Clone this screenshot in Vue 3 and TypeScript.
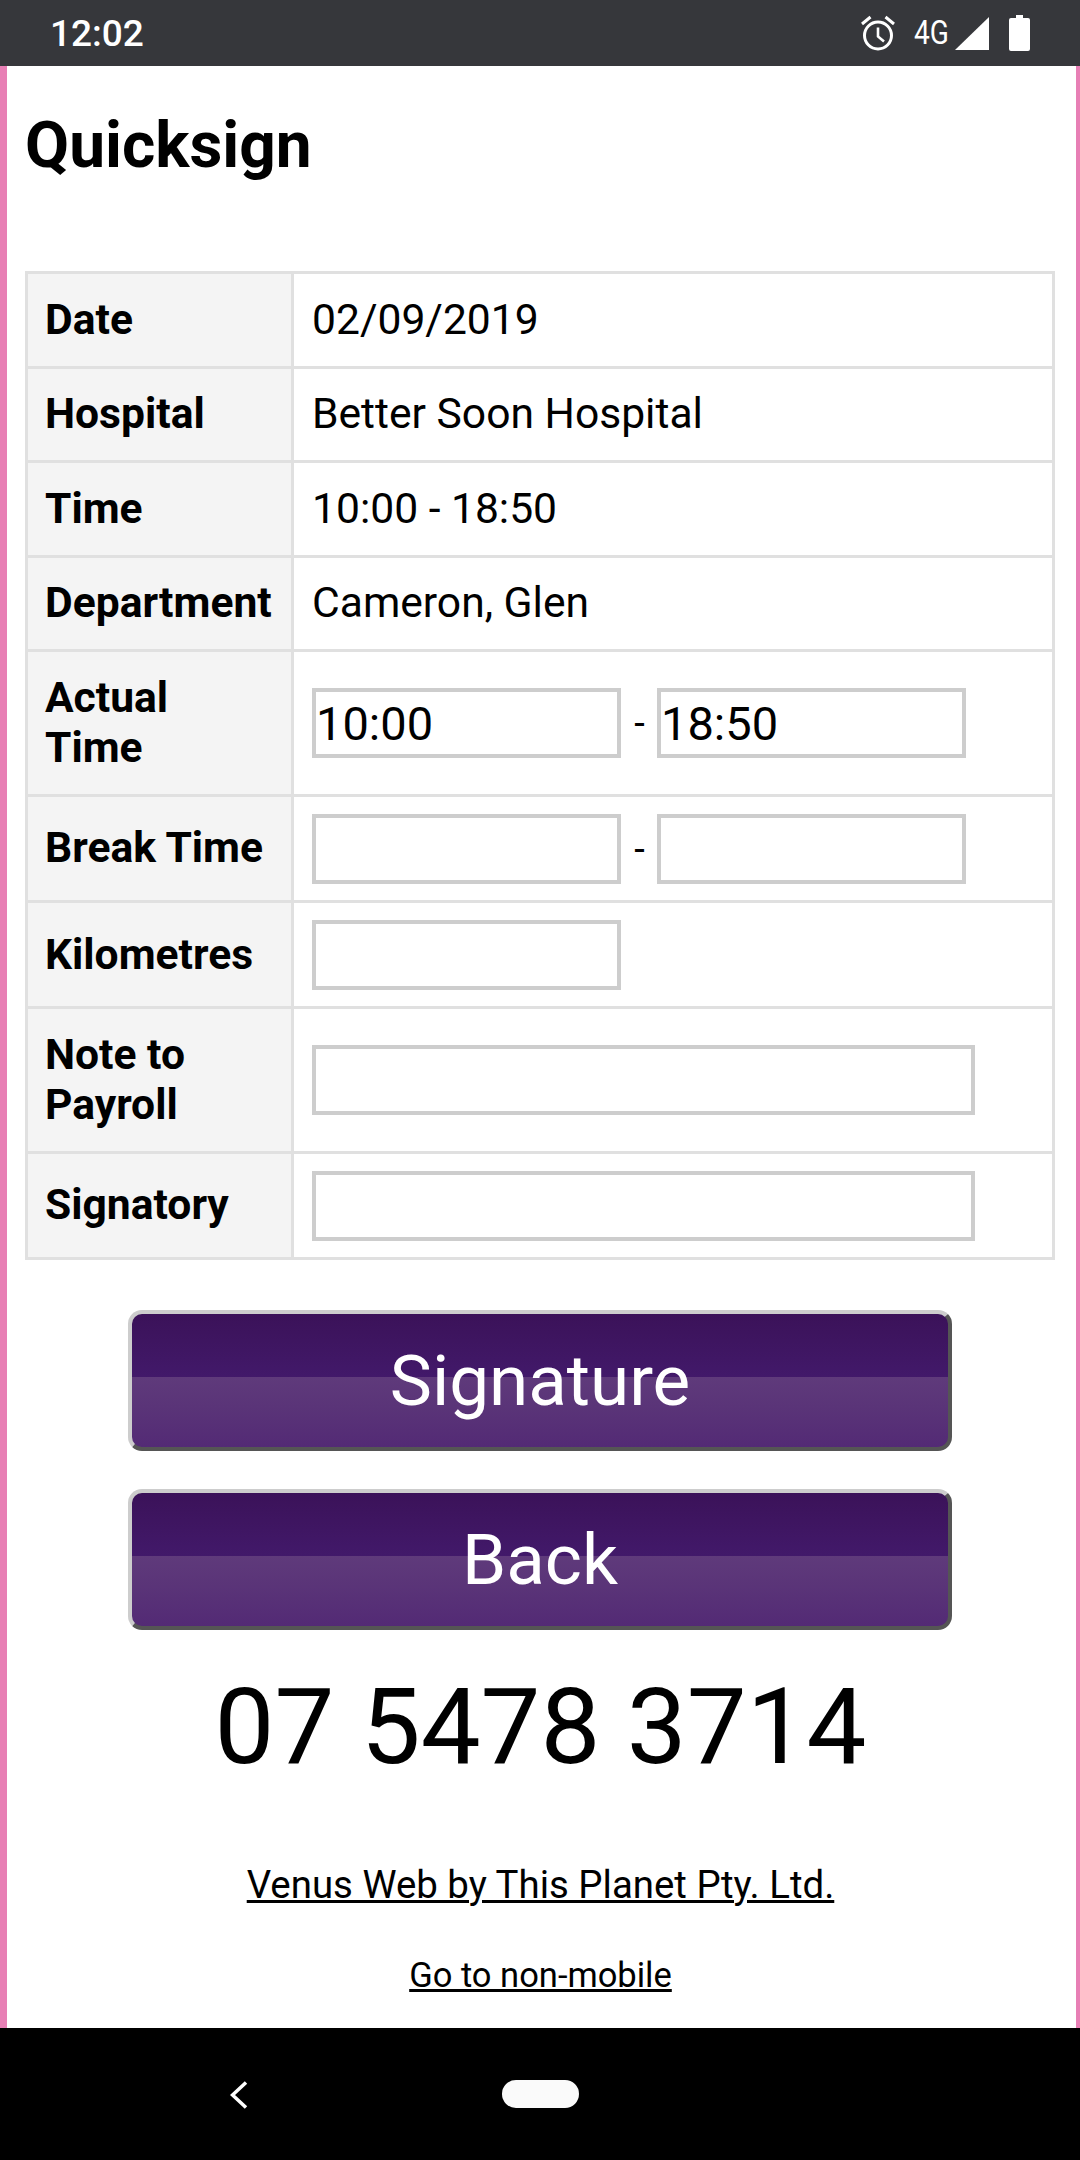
<script setup lang="ts">
const infoRows = [
  { label: 'Date', value: '02/09/2019' },
  { label: 'Hospital', value: 'Better Soon Hospital' },
  { label: 'Time', value: '10:00 - 18:50' },
  { label: 'Department', value: 'Cameron, Glen' },
];
</script>

<template>
  <div class="screen">
    <header class="status-bar">
      <span class="clock">12:02</span>
      <div class="status-icons">
        <svg class="alarm" width="36" height="36" viewBox="0 0 36 36">
          <circle cx="18" cy="20.5" r="13.5" fill="none" stroke="#fff" stroke-width="3" />
          <path d="M18 12.5v9l6 5" fill="none" stroke="#fff" stroke-width="2.6" />
          <path d="M2 9 10.500 2M34 9 25.500 2" fill="none" stroke="#fff" stroke-width="3" />
        </svg>
        <span class="network">4G</span>
        <svg class="signal" width="34" height="33" viewBox="0 0 34 33">
          <path d="M0 33 34 0v33z" fill="#fff" />
        </svg>
        <svg class="battery" width="21" height="36" viewBox="0 0 21 36">
          <path d="M7 0h7v3h5a2 2 0 0 1 2 2v29a2 2 0 0 1-2 2H2a2 2 0 0 1-2-2V5a2 2 0 0 1 2-2h5z" fill="#fff" />
        </svg>
      </div>
    </header>

    <main class="page">
      <h1>Quicksign</h1>
      <table class="sign-table">
        <colgroup>
          <col class="label-col" />
          <col />
        </colgroup>
        <tbody>
          <tr v-for="row in infoRows" :key="row.label">
            <th>{{ row.label }}</th>
            <td>{{ row.value }}</td>
          </tr>
          <tr>
            <th>Actual<br />Time</th>
            <td class="field">
              <div class="time-range">
                <input class="short" type="text" value="10:00" />
                <span class="dash">-</span>
                <input class="short" type="text" value="18:50" />
              </div>
            </td>
          </tr>
          <tr>
            <th>Break Time</th>
            <td class="field">
              <div class="time-range">
                <input class="short" type="text" />
                <span class="dash">-</span>
                <input class="short" type="text" />
              </div>
            </td>
          </tr>
          <tr>
            <th>Kilometres</th>
            <td class="field"><input class="short" type="text" /></td>
          </tr>
          <tr>
            <th>Note to<br />Payroll</th>
            <td class="field"><input class="long" type="text" /></td>
          </tr>
          <tr>
            <th>Signatory</th>
            <td class="field"><input class="long" type="text" /></td>
          </tr>
        </tbody>
      </table>

      <div class="actions">
        <button type="button" class="gel-btn">Signature</button>
        <button type="button" class="gel-btn">Back</button>
      </div>

      <div class="phone">07 5478 3714</div>
      <a class="credit" href="#">Venus Web by This Planet Pty. Ltd.</a>
      <a class="non-mobile" href="#">Go to non-mobile</a>
    </main>

    <footer class="nav-bar">
      <svg class="nav-back" width="18" height="28" viewBox="0 0 18 28">
        <path d="M16 1.500 2.500 14 16 26.500" fill="none" stroke="#fff" stroke-width="3.5" />
      </svg>
      <span class="nav-home"></span>
    </footer>
  </div>
</template>

<style>
html,
body {
  margin: 0;
  background: #000;
}
</style>

<style scoped>
.screen {
  width: 1080px;
  height: 2160px;
  display: flex;
  flex-direction: column;
  overflow: hidden;
  font-family: Roboto, "Liberation Sans", sans-serif;
  color: #000;
  background: #fff;
}

.status-bar {
  flex: 0 0 66px;
  box-sizing: border-box;
  padding: 0 50px 0 50px;
  display: flex;
  align-items: center;
  justify-content: space-between;
  background: #36373b;
  color: #fff;
}
.clock {
  font-size: 37px;
  font-weight: 500;
}
.status-icons {
  display: flex;
  align-items: center;
}
.alarm {
  margin-right: 18px;
}
.network {
  width: 36px;
  font-size: 33px;
  line-height: 36px;
  transform: scaleX(0.85);
  transform-origin: left center;
  margin-right: 5px;
}
.signal {
  margin-right: 20px;
}

.page {
  flex: 1;
  min-height: 0;
  box-sizing: border-box;
  padding: 0 4px 0 7px;
  background: linear-gradient(#fff, #fff) content-box, #e87fb5;
  display: flex;
  flex-direction: column;
  align-items: center;
}
h1 {
  align-self: flex-start;
  margin: 44px 0 89px 18px;
  font-size: 64px;
  line-height: 72px;
  font-weight: 700;
}

.sign-table {
  align-self: flex-start;
  margin-left: 18px;
  width: 1030px;
  table-layout: fixed;
  border-collapse: collapse;
  font-size: 42.6px;
  line-height: 50px;
}
.label-col {
  width: 266px;
}
th,
td {
  border: 3px solid #e0e0e0;
  padding: 19.6px 18px 22px;
  text-align: left;
}
th {
  padding-left: 17px;
  background: #f4f4f4;
  font-weight: 700;
}
td.field {
  padding-top: 16.6px;
  padding-bottom: 16.6px;
}
.time-range {
  display: flex;
  align-items: center;
}
.dash {
  width: 36px;
  padding-left: 1px;
  box-sizing: border-box;
  text-align: center;
  font-size: 38px;
}
input {
  display: block;
  box-sizing: border-box;
  height: 70px;
  margin: 0;
  padding: 0;
  border: 4px solid #cdcdcd;
  border-radius: 0;
  outline: none;
  background: #fff;
  font-family: inherit;
  font-size: 47px;
  color: #000;
}
.short {
  width: 309px;
}
.long {
  width: 663px;
}

.actions {
  margin-top: 50px;
  margin-right: 3px;
  display: flex;
  flex-direction: column;
  gap: 37.5px;
}
.gel-btn {
  box-sizing: border-box;
  width: 824px;
  height: 141px;
  padding: 0;
  border: 4px solid;
  border-color: #cdcdcd #555 #555 #cdcdcd;
  border-radius: 14px;
  background: linear-gradient(#3b1259 0%, #42196a 47.5%, #5f3a7b 47.5%, #5a3478 70%, #532a75 100%);
  color: #fff;
  font-family: inherit;
  font-size: 71px;
}

.phone {
  margin-top: 35px;
  margin-right: 2px;
  font-size: 106.6px;
  line-height: 124px;
}
.credit {
  margin-top: 73px;
  margin-right: 2px;
  font-size: 38.4px;
  line-height: 45px;
  color: #000;
}
.non-mobile {
  margin-top: 48px;
  margin-right: 2px;
  font-size: 34.5px;
  line-height: 41px;
  color: #000;
}

.nav-bar {
  flex: 0 0 132px;
  position: relative;
  background: #000;
}
.nav-back {
  position: absolute;
  left: 230px;
  top: 53px;
}
.nav-home {
  position: absolute;
  left: 502px;
  top: 52px;
  width: 77px;
  height: 28px;
  border-radius: 14px;
  background: #fafafa;
}
</style>
